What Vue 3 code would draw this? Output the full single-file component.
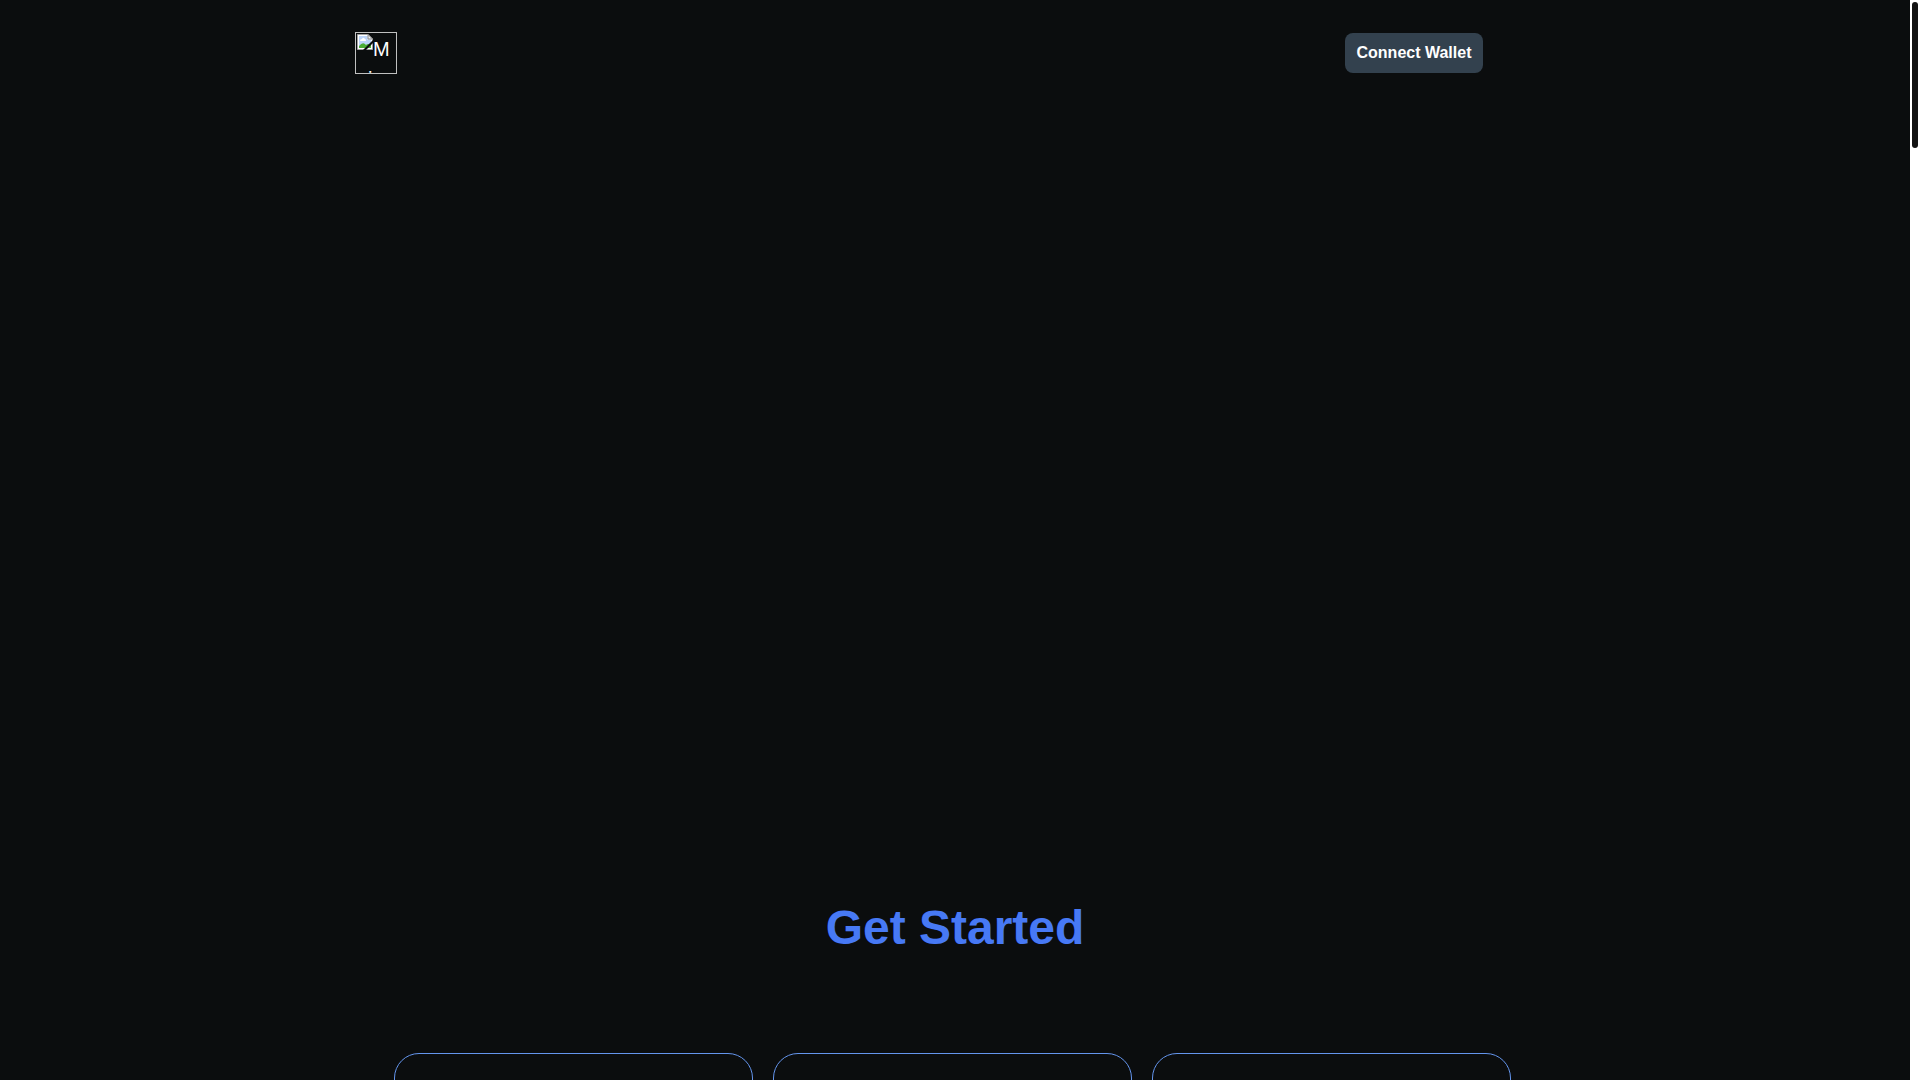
<script setup>
const steps = [1, 2, 3]
</script>

<template>
  <div class="viewport">
    <div class="page">
      <header class="header">
        <a href="#" class="logo">
          <svg class="picture" width="16" height="16" viewBox="0 0 16 16" aria-hidden="true">
            <path d="M0.5 0.5H11L15.5 5V15.5H0.5Z" fill="#fff" stroke="#a0a0a0" />
            <path d="M2 2H10.5V5.5H14V14H2Z" fill="#bcd4f8" />
            <path d="M3 7Q3 5 5 5Q6 3 7.500 4.500Q9 4.500 9 7Z" fill="#fff" />
            <path d="M2 14V12Q6 7 9 11Q11 9 14 11V14Z" fill="#4bad35" />
            <path d="M6 16L16 6V9L9 16Z" fill="#0b0d0e" />
            <path d="M11 0.500V5H15.500Z" fill="#eee" stroke="#888" />
          </svg><span>Main</span>
        </a>
        <button type="button" class="connect">Connect Wallet</button>
      </header>
      <main class="main">
        <h1 class="title">Get Started</h1>
        <section class="cards">
          <article v-for="step in steps" :key="step" class="card"></article>
        </section>
      </main>
    </div>
    <div class="track" aria-hidden="true"><div class="thumb"></div></div>
  </div>
</template>

<style>
body {
  background: #0b0d0e;
}
</style>

<style scoped>
.viewport {
  display: flex;
  height: 100vh;
  overflow: hidden;
  color: #fff;
  font-family: "Liberation Sans", Arial, sans-serif;
}
.page {
  flex: 1;
  min-width: 0;
  background: #0b0d0e;
}
.header {
  box-sizing: border-box;
  display: flex;
  justify-content: space-between;
  align-items: center;
  max-width: 1200px;
  margin: 0 auto;
  padding: 32px 72px 32px 0;
}
.logo {
  box-sizing: border-box;
  width: 42px;
  height: 42px;
  padding: 1px;
  border: 1px solid #c0c0c0;
  overflow: hidden;
  color: #fff;
  font-size: 20px;
  line-height: 30px;
  text-decoration: none;
  word-break: break-all;
}
.picture {
  float: left;
}
.connect {
  width: 138px;
  height: 40px;
  padding: 0;
  border: 0;
  border-radius: 8px;
  background: #33414e;
  color: #fff;
  font: bold 16px "Liberation Sans", Arial, sans-serif;
}
.main {
  max-width: 1200px;
  margin: 0 auto;
  padding-top: 794px;
}
.title {
  margin: 0;
  color: #4779f5;
  font-size: 48px;
  line-height: 56px;
  text-align: center;
}
.cards {
  display: grid;
  grid-template-columns: repeat(3, 1fr);
  gap: 20px;
  padding: 97px 44px 0 39px;
}
.card {
  height: 360px;
  border: 1px solid #6495ed;
  border-radius: 25px;
}
.track {
  box-sizing: border-box;
  width: 10px;
  padding: 2px;
  background: #fff;
}
.thumb {
  height: 146px;
  border-radius: 3px;
  background: #121212;
}
</style>
